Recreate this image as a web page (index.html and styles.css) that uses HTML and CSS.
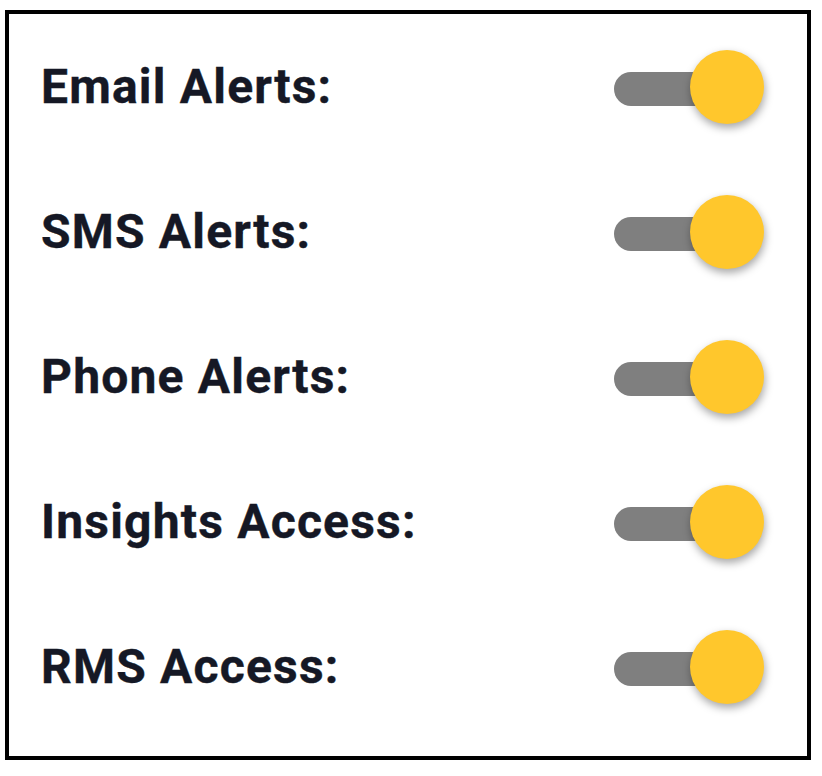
FILE: index.html
```html
<!DOCTYPE html>
<html>
	<head>
		<meta charset="UTF-8">
		<title>Alerts</title>
		<link rel="stylesheet" href="styles.css">
	</head>
	<body>
		<div class="panel">
			<div class="row">
				<span class="label">Email Alerts:</span>
				<span class="switch"><span class="track"></span><span class="knob"></span></span>
			</div>
			<div class="row">
				<span class="label">SMS Alerts:</span>
				<span class="switch"><span class="track"></span><span class="knob"></span></span>
			</div>
			<div class="row">
				<span class="label">Phone Alerts:</span>
				<span class="switch"><span class="track"></span><span class="knob"></span></span>
			</div>
			<div class="row">
				<span class="label">Insights Access:</span>
				<span class="switch"><span class="track"></span><span class="knob"></span></span>
			</div>
			<div class="row">
				<span class="label">RMS Access:</span>
				<span class="switch"><span class="track"></span><span class="knob"></span></span>
			</div>
		</div>
	</body>
</html>
```

FILE: styles.css
```css
*{
	margin: 0;
	padding: 0;
	box-sizing: border-box;
}
body{
	background: #fff;
	padding: 10px 0 0 5px;
	font-family: Roboto, "Liberation Sans", sans-serif;
}
.panel{
	width: 806px;
	height: 750px;
	border: 4px solid #000;
	padding: 0 43px 0 32px;
}
.row{
	height: 145px;
	display: flex;
	align-items: center;
	justify-content: space-between;
}
.label{
	font-size: 48px;
	font-weight: 700;
	color: #151825;
	letter-spacing: 1.2px;
	-webkit-text-stroke: 0.4px #151825;
}
.switch{
	position: relative;
	width: 150px;
	height: 74px;
	display: block;
}
.track{
	position: absolute;
	left: 0;
	top: 22px;
	width: 120px;
	height: 34px;
	border-radius: 17px;
	background: #7f7f7f;
}
.knob{
	position: absolute;
	right: 0;
	top: 0;
	width: 74px;
	height: 74px;
	border-radius: 50%;
	background: #ffc72c;
	box-shadow: 1px 4px 8px rgba(0,0,0,0.35);
}
```
